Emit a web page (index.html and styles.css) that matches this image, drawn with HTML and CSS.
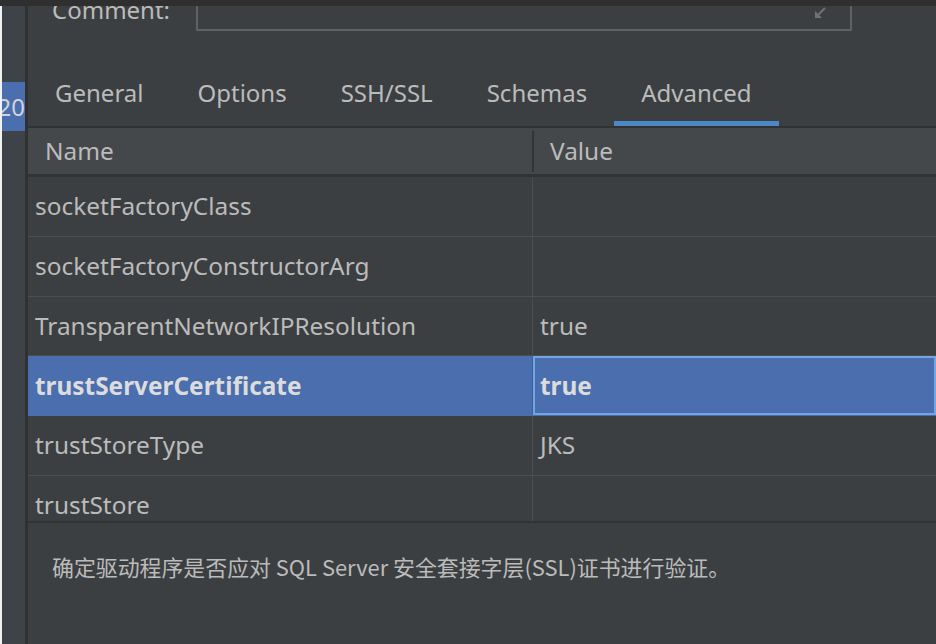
FILE: index.html
```html
<!DOCTYPE html>
<html lang="zh-CN">
<head>
<meta charset="utf-8">
<title>Advanced</title>
<link rel="stylesheet" href="styles.css">
</head>
<body>
<div class="screen">
  <div class="topbar"></div>
  <div class="frame">
    <aside class="side">
      <div class="side-item">20</div>
    </aside>
    <main class="main">
      <div class="comment-row">
        <label class="comment-label">Comment:</label>
        <div class="comment-field">
          <svg class="expand" viewBox="0 0 12 12" width="12" height="12">
            <path d="M11 1 L4.5 7.5" stroke="#6f7375" stroke-width="2" fill="none"/>
            <polygon points="1,4 1,11 8,11" fill="#6f7375"/>
          </svg>
        </div>
      </div>
      <nav class="tabs">
        <div class="tab">General</div>
        <div class="tab">Options</div>
        <div class="tab">SSH/SSL</div>
        <div class="tab">Schemas</div>
        <div class="tab active">Advanced</div>
      </nav>
      <div class="table">
        <div class="thead">
          <div class="th th-name">Name</div>
          <div class="th th-value">Value</div>
        </div>
        <div class="tbody">
          <div class="tr"><div class="td td-name">socketFactoryClass</div><div class="td td-value"></div></div>
          <div class="tr"><div class="td td-name">socketFactoryConstructorArg</div><div class="td td-value"></div></div>
          <div class="tr"><div class="td td-name">TransparentNetworkIPResolution</div><div class="td td-value">true</div></div>
          <div class="tr selected"><div class="td td-name">trustServerCertificate</div><div class="td td-value">true</div></div>
          <div class="tr"><div class="td td-name">trustStoreType</div><div class="td td-value">JKS</div></div>
          <div class="tr"><div class="td td-name">trustStore</div><div class="td td-value"></div></div>
        </div>
      </div>
      <div class="desc">确定驱动程序是否应对 SQL Server 安全套接字层(SSL)证书进行验证。</div>
    </main>
  </div>
</div>
</body>
</html>
```
FILE: styles.css
```css
html, body {
  margin: 0;
  padding: 0;
}
body {
  background: #3c3f41;
  font-family: "Noto Sans", "Noto Sans CJK SC", sans-serif;
  font-size: 24px;
  color: #bbbbbb;
}
.screen {
  width: 936px;
  height: 644px;
  overflow: hidden;
  display: flex;
  flex-direction: column;
}
.topbar {
  height: 6px;
  flex: none;
  background: #2f2f30;
}
.frame {
  flex: 1;
  display: flex;
  min-height: 0;
}
.side {
  width: 23px;
  flex: none;
  background: #3e4249;
  border-left: 2px solid #f2f2f2;
  border-right: 3px solid #2f3133;
}
.side-item {
  margin-top: 76px;
  height: 49px;
  background: #4b6eaf;
  color: #d0d4da;
  display: flex;
  align-items: center;
  justify-content: flex-end;
  overflow: hidden;
  white-space: nowrap;
  line-height: 1;
}
.main {
  flex: 1;
  min-width: 0;
  display: flex;
  flex-direction: column;
  background: #3c3f41;
}
.comment-row {
  height: 25px;
  flex: none;
  overflow: hidden;
  display: flex;
  align-items: flex-end;
}
.comment-label {
  align-self: flex-start;
  margin-top: -11px;
  padding-left: 24px;
  width: 168px;
  box-sizing: border-box;
  line-height: 30px;
  flex: none;
}
.comment-field {
  width: 656px;
  height: 44px;
  box-sizing: border-box;
  border: 2px solid #5f6264;
  flex: none;
  display: flex;
  justify-content: flex-end;
  align-items: flex-end;
  padding: 0 24px 10px 0;
}
.expand {
  display: block;
}
.tabs {
  height: 95px;
  flex: none;
  display: flex;
  align-items: flex-end;
}
.tab {
  height: 60px;
  box-sizing: border-box;
  padding: 12px 27px 0;
  line-height: 30px;
  border-bottom: 5px solid transparent;
  white-space: nowrap;
}
.tab.active {
  border-bottom-color: #4a88c7;
}
.table {
  flex: none;
  border-top: 2px solid #2f3133;
  border-bottom: 2px solid #303234;
  font-size: 24.4px;
}
.thead {
  display: flex;
  height: 49px;
  box-sizing: border-box;
  background: #45484a;
  border-bottom: 3px solid #313335;
}
.th {
  display: flex;
  align-items: center;
  padding-left: 17px;
  box-sizing: border-box;
  line-height: 30px;
}
.th-name {
  width: 505px;
  flex: none;
  position: relative;
}
.th-name::after {
  content: "";
  position: absolute;
  right: -1px;
  top: 3px;
  bottom: 2px;
  width: 2px;
  background: #323436;
}
.th-value {
  flex: 1;
}
.tbody {
  height: 344px;
  overflow: hidden;
}
.tr {
  display: flex;
  height: 59.75px;
  box-sizing: border-box;
  border-bottom: 1px solid #4b4e50;
}
.td {
  display: flex;
  align-items: center;
  box-sizing: border-box;
  padding-left: 7px;
  white-space: nowrap;
  line-height: 30px;
}
.td-name {
  width: 505px;
  flex: none;
  border-right: 1px solid #4b4e50;
}
.td-value {
  flex: 1;
}
.tr.selected {
  background: #4b6eaf;
  border-bottom-color: #4b6eaf;
  color: #dcdcdc;
  font-weight: 700;
}
.tr.selected .td-name {
  border-right-color: #3f5f99;
}
.tr.selected .td-value {
  border: 2px solid #72a6e2;
  padding-left: 5px;
}
.desc {
  flex: 1;
  font-family: "Noto Sans CJK SC", "Noto Sans", sans-serif;
  font-size: 21.9px;
  line-height: 30px;
  padding: 29px 0 0 24px;
  white-space: nowrap;
}
```
